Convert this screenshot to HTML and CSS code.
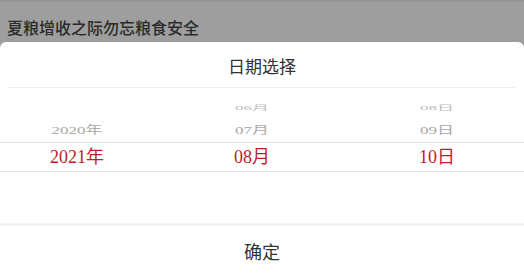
FILE: index.html
```html
<!DOCTYPE html>
<html lang="zh">
<head>
<meta charset="utf-8">
<link rel="stylesheet" href="styles.css">
</head>
<body>
<div class="page">
  <div class="topbar">夏粮增收之际勿忘粮食安全</div>
  <div class="sheet">
    <div class="sheet-title">日期选择</div>
    <div class="picker">
      <div class="prow far">
        <span class="cell"></span>
        <span class="cell"><span class="txt">06月</span></span>
        <span class="cell"><span class="txt">08日</span></span>
      </div>
      <div class="prow near">
        <span class="cell"><span class="txt">2020年</span></span>
        <span class="cell"><span class="txt">07月</span></span>
        <span class="cell"><span class="txt">09日</span></span>
      </div>
      <div class="prow sel">
        <span class="cell"><span class="txt">2021年</span></span>
        <span class="cell"><span class="txt">08月</span></span>
        <span class="cell"><span class="txt">10日</span></span>
      </div>
      <div class="prow empty"></div>
    </div>
    <div class="confirm">确定</div>
  </div>
</div>
</body>
</html>
```
FILE: styles.css
```css
html, body {
  margin: 0;
  padding: 0;
}
body {
  width: 524px;
  height: 277px;
  overflow: hidden;
  background: #9e9e9e;
}
.page {
  width: 524px;
  height: 277px;
  display: flex;
  flex-direction: column;
}
.topbar {
  height: 44px;
  box-sizing: border-box;
  padding: 13px 0 0 7px;
  line-height: 24px;
  font-family: "Noto Sans CJK SC", sans-serif;
  font-size: 16px;
  font-weight: 500;
  color: #2b2b2b;
  border-top: 2px solid #959595;
}
.sheet {
  flex: 1;
  background: #fff;
  border-radius: 6px 6px 0 0;
  display: flex;
  flex-direction: column;
}
.sheet-title {
  margin: 0 8px;
  padding: 12px 0 9px;
  line-height: 24px;
  text-align: center;
  font-family: "Noto Sans CJK SC", sans-serif;
  font-size: 17px;
  color: #333;
  border-bottom: 1px solid #f0f0f0;
}
.picker {
  display: flex;
  flex-direction: column;
  font-family: "Liberation Serif", "Noto Sans CJK SC", serif;
  font-size: 18px;
}
.prow {
  display: grid;
  grid-template-columns: 154px 196px 174px;
}
.cell {
  text-align: center;
}
.txt {
  display: inline-block;
}
.far {
  padding-top: 8px;
  line-height: 22px;
  color: #bdbdbd;
}
.far .txt {
  transform: scaleY(0.42);
  font-size: 17px;
}
.near {
  line-height: 22px;
  color: #a8a8a8;
}
.near .txt {
  transform: scaleY(0.64);
  font-size: 17px;
}
.sel {
  line-height: 28px;
  color: #c41a2a;
  border-top: 1px solid #e3e3e3;
  border-bottom: 1px solid #e3e3e3;
}
.empty {
  height: 51px;
}
.confirm {
  border-top: 3px solid #f4f4f4;
  line-height: 51px;
  text-align: center;
  font-family: "Noto Sans CJK SC", sans-serif;
  font-size: 18px;
  color: #333;
}
```
